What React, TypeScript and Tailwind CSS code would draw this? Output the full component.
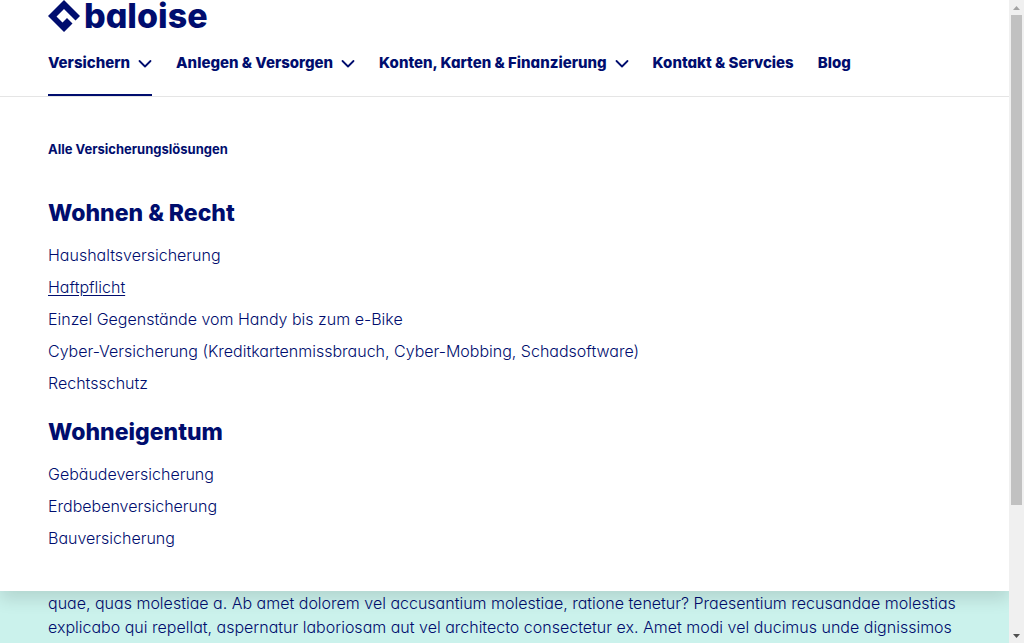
type NavItem = { label: string; expandable?: boolean; active?: boolean };
type LinkGroup = { title: string; links: { label: string; active?: boolean }[] };

const navItems: NavItem[] = [
  { label: "Versichern", expandable: true, active: true },
  { label: "Anlegen & Versorgen", expandable: true },
  { label: "Konten, Karten & Finanzierung", expandable: true },
  { label: "Kontakt & Servcies" },
  { label: "Blog" },
];

const groups: LinkGroup[] = [
  {
    title: "Wohnen & Recht",
    links: [
      { label: "Haushaltsversicherung" },
      { label: "Haftpflicht", active: true },
      { label: "Einzel Gegenstände vom Handy bis zum e-Bike" },
      { label: "Cyber-Versicherung (Kreditkartenmissbrauch, Cyber-Mobbing, Schadsoftware)" },
      { label: "Rechtsschutz" },
    ],
  },
  {
    title: "Wohneigentum",
    links: [
      { label: "Gebäudeversicherung" },
      { label: "Erdbebenversicherung" },
      { label: "Bauversicherung" },
    ],
  },
];

function Logo() {
  return (
    <a href="#home" aria-label="baloise" className="flex h-8 w-fit items-center gap-1">
      <svg viewBox="0 0 32 32" className="size-8" fill="currentColor" aria-hidden="true">
        <path d="M16 0 32 16 27.5 20.5 16 9 8.5 16.5 14.5 22.5 19 18 24.5 23.5 16 32 0 16Z" />
      </svg>
      <span className="text-[34px] leading-8 font-extrabold">baloise</span>
    </a>
  );
}

function Chevron() {
  return (
    <svg viewBox="0 0 14 14" className="size-3.5" fill="none" stroke="currentColor" strokeWidth="1.8" strokeLinecap="round" strokeLinejoin="round" aria-hidden="true">
      <path d="M1.5 5 7 10.5 12.5 5" />
    </svg>
  );
}

function NavEntry({ item }: { item: NavItem }) {
  if (!item.expandable) {
    return (
      <a href="#page" className="flex h-full items-center border-b-2 border-transparent">
        {item.label}
      </a>
    );
  }
  return (
    <button
      type="button"
      aria-expanded={!!item.active}
      className={
        item.active
          ? "flex h-full items-center gap-2 border-b-2 border-[#000d6e]"
          : "flex h-full items-center gap-2 border-b-2 border-transparent"
      }
    >
      {item.label}
      <Chevron />
    </button>
  );
}

function Scrollbar() {
  return (
    <div aria-hidden="true" className="flex w-[15px] shrink-0 flex-col items-center bg-[#f0f0f0]">
      <svg viewBox="0 0 15 15" className="size-[15px] shrink-0 text-[#a3a3a3]" fill="currentColor">
        <path d="M4 10 7.5 6 11 10Z" />
      </svg>
      <div className="flex w-[11px] grow flex-col">
        <div className="h-4/5 bg-[#c1c1c1]" />
      </div>
      <svg viewBox="0 0 15 15" className="size-[15px] shrink-0 text-[#505050]" fill="currentColor">
        <path d="M4 6 7.5 10 11 6Z" />
      </svg>
    </div>
  );
}

export default function App() {
  return (
    <div className="flex h-screen overflow-hidden bg-[#cbf2ec] font-['Inter',sans-serif] text-base font-light text-[#000d6e] [font-feature-settings:'cv11']">
      <div className="min-w-0 grow overflow-hidden">
        <div className="relative bg-white shadow-[0_8px_16px_rgba(0,0,0,0.12)]">
          <header className="border-b border-[#e5e5e5]">
            <div className="px-12">
              <Logo />
              <nav aria-label="Hauptnavigation" className="flex h-16 gap-6 text-[15px] font-extrabold whitespace-nowrap">
                {navItems.map((item) => (
                  <NavEntry key={item.label} item={item} />
                ))}
              </nav>
            </div>
          </header>
          <div className="px-12 pt-10 pb-[37px]">
            <a href="#alle" className="block text-[13px] leading-6 font-bold">
              Alle Versicherungslösungen
            </a>
            <div className="flex flex-col gap-[17px] pt-9">
              {groups.map((group) => (
                <section key={group.title}>
                  <h2 className="pb-2.5 text-[23px] leading-8 font-extrabold">{group.title}</h2>
                  <ul>
                    {group.links.map((link) => (
                      <li key={link.label} className="py-1">
                        <a href="#link" className={link.active ? "underline underline-offset-2" : ""}>
                          {link.label}
                        </a>
                      </li>
                    ))}
                  </ul>
                </section>
              ))}
            </div>
          </div>
        </div>
        <main className="px-12">
          <p>
            quae, quas molestiae a. Ab amet dolorem vel accusantium molestiae, ratione tenetur? Praesentium recusandae molestias
            explicabo qui repellat, aspernatur laboriosam aut vel architecto consectetur ex. Amet modi vel ducimus unde dignissimos
          </p>
        </main>
      </div>
      <Scrollbar />
    </div>
  );
}
